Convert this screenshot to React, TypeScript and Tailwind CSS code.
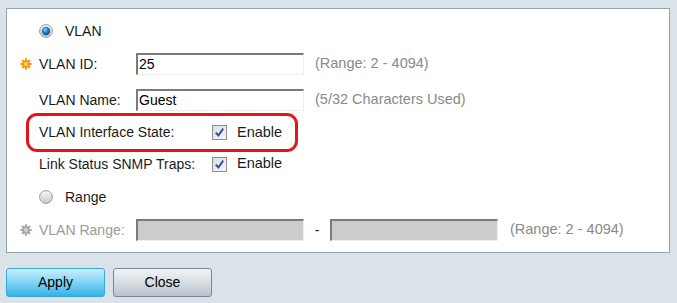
import React from "react";

// Маленькая шестерёнка-звёздочка перед обязательными полями
function Gear({ disabled = false }: { disabled?: boolean }) {
  const outer = disabled ? "#a8a8a8" : "#f39a1e";
  const inner = disabled ? "#d6d6d6" : "#ffd34a";
  const spikes = Array.from({ length: 8 }, (_, i) => i * 45);
  return (
    <svg width="12" height="12" viewBox="0 0 12 12">
      {spikes.map((a) => (
        <rect
          key={a}
          x="5"
          y="0.3"
          width="2"
          height="3"
          fill={outer}
          transform={`rotate(${a} 6 6)`}
        />
      ))}
      <circle cx="6" cy="6" r="3.9" fill={outer} />
      <circle cx="6" cy="6" r="1.9" fill={inner} />
    </svg>
  );
}

function Radio({ checked }: { checked: boolean }) {
  return (
    <svg width="14" height="14" viewBox="0 0 14 14">
      <defs>
        <linearGradient id="rg-ring" x1="0" y1="0" x2="0" y2="1">
          <stop offset="0" stopColor="#f7f7f7" />
          <stop offset="1" stopColor="#c9c9c9" />
        </linearGradient>
        <radialGradient id="rg-dot" cx="0.4" cy="0.35" r="0.7">
          <stop offset="0" stopColor="#8fd0f5" />
          <stop offset="0.45" stopColor="#2a86c9" />
          <stop offset="1" stopColor="#0d3f72" />
        </radialGradient>
      </defs>
      <circle cx="7" cy="7" r="6.4" fill="url(#rg-ring)" stroke="#9a9a9a" strokeWidth="1" />
      {checked && <circle cx="7" cy="7" r="4.2" fill="url(#rg-dot)" />}
    </svg>
  );
}

function Checkbox() {
  return (
    <svg width="15" height="15" viewBox="0 0 15 15">
      <defs>
        <linearGradient id="cb-bg" x1="0" y1="0" x2="1" y2="1">
          <stop offset="0" stopColor="#d9dde3" />
          <stop offset="1" stopColor="#f6f7f9" />
        </linearGradient>
      </defs>
      <rect x="0.5" y="0.5" width="14" height="14" fill="url(#cb-bg)" stroke="#8e8f8f" />
      <path d="M3.8 7.6 L6.4 10.5 L11.2 3.6" fill="none" stroke="#2d4fa3" strokeWidth="1.9" />
    </svg>
  );
}

function Field({ value = "", disabled = false }: { value?: string; disabled?: boolean }) {
  return (
    <div
      className={`w-[168px] h-[22px] border-t-2 border-l-2 border-r border-b border-t-[#7b7b7b] border-l-[#7b7b7b] border-r-[#eeeeee] border-b-[#eeeeee] px-[1px] flex items-center text-black ${
        disabled ? "bg-[#cccccc]" : "bg-white"
      }`}
    >
      {value}
    </div>
  );
}

export default function App() {
  return (
    <div className="w-[677px] h-[303px] bg-[#dbe3ea] pt-[8px] px-[6px] text-[14px] text-[#1b1b1b] font-['Liberation_Sans',Arial,sans-serif]">
      <div className="w-[664px] bg-white border border-[#92a2ae] pt-[11px] pb-[11px]">
        {/* VLAN */}
        <div className="h-[22px] pl-[32px] flex items-center">
          <Radio checked />
          <span className="ml-[12px]">VLAN</span>
        </div>

        {/* VLAN ID */}
        <div className="h-[22px] mt-[11px] pl-[13px] flex items-center">
          <span className="w-[12px] mr-[7px] flex items-center">
            <Gear />
          </span>
          <span className="w-[97px]">VLAN ID:</span>
          <Field value="25" />
          <span className="ml-[11px] text-[14.5px] text-[#8a8a8a]">(Range: 2 - 4094)</span>
        </div>

        {/* VLAN Name */}
        <div className="h-[22px] mt-[14px] pl-[32px] flex items-center">
          <span className="w-[97px]">VLAN Name:</span>
          <Field value="Guest" />
          <span className="ml-[11px] text-[14.5px] text-[#8a8a8a]">(5/32 Characters Used)</span>
        </div>

        {/* VLAN Interface State, обведено красным */}
        <div className="relative h-[39px] mt-[2px] pl-[32px] flex items-center">
          <span className="absolute left-[19px] top-0 w-[272px] h-[39px] border-[3px] border-[#e3141c] rounded-[11px]" />
          <span className="w-[173px]">VLAN Interface State:</span>
          <Checkbox />
          <span className="ml-[10px] text-[14.5px]">Enable</span>
        </div>

        {/* Link Status SNMP Traps */}
        <div className="h-[22px] mt-[1px] pl-[32px] flex items-center">
          <span className="w-[173px]">Link Status SNMP Traps:</span>
          <Checkbox />
          <span className="ml-[10px] text-[14.5px]">Enable</span>
        </div>

        {/* Range */}
        <div className="h-[22px] mt-[11px] pl-[32px] flex items-center">
          <Radio checked={false} />
          <span className="ml-[12px]">Range</span>
        </div>

        {/* VLAN Range */}
        <div className="h-[22px] mt-[11px] pl-[13px] flex items-center text-[#9b9b9b]">
          <span className="w-[12px] mr-[7px] flex items-center">
            <Gear disabled />
          </span>
          <span className="w-[97px]">VLAN Range:</span>
          <Field disabled />
          <span className="w-[26px] text-center text-[#1b1b1b]">-</span>
          <Field disabled />
          <span className="ml-[12px] text-[14.5px] text-[#8a8a8a]">(Range: 2 - 4094)</span>
        </div>
      </div>

      <div className="mt-[15px] flex gap-[8px]">
        <button className="w-[99px] h-[29px] rounded-[3px] border border-[#3ba7d6] bg-gradient-to-b from-[#c9efff] via-[#7fd3f5] to-[#2fb3e8] text-black">
          Apply
        </button>
        <button className="w-[99px] h-[29px] rounded-[3px] border border-[#7a8790] bg-gradient-to-b from-[#f1f4f6] via-[#d7dee3] to-[#b7c3cb] text-black">
          Close
        </button>
      </div>
    </div>
  );
}
